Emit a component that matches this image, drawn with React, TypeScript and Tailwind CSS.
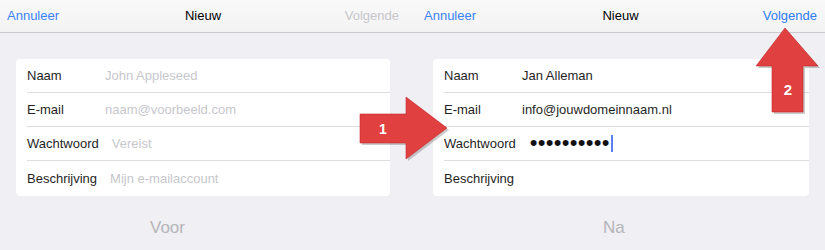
import React from "react";

type Row = { label: string; value?: string; placeholder?: string; password?: boolean };

const leftRows: Row[] = [
  { label: "Naam", placeholder: "John Appleseed" },
  { label: "E-mail", placeholder: "naam@voorbeeld.com" },
  { label: "Wachtwoord", placeholder: "Vereist" },
  { label: "Beschrijving", placeholder: "Mijn e-mailaccount" },
];

const rightRows: Row[] = [
  { label: "Naam", value: "Jan Alleman" },
  { label: "E-mail", value: "info@jouwdomeinnaam.nl" },
  { label: "Wachtwoord", password: true },
  { label: "Beschrijving" },
];

function Card({ rows }: { rows: Row[] }) {
  return (
    <div className="bg-white rounded-[4px]">
      {rows.map((r, i) => (
        <div key={r.label} className="pl-[11px]">
          <div
            className={
              "flex items-center text-[13px] " +
              (i < rows.length - 1 ? "h-[34px] border-b border-[#dedee2]" : "h-[35px]")
            }
          >
            <span className="min-w-[65px] mr-[13px] text-[#1f1f1f] whitespace-nowrap">{r.label}</span>
            {r.value && <span className="text-[#1f1f1f]">{r.value}</span>}
            {r.placeholder && <span className="text-[#c7c7cd]">{r.placeholder}</span>}
            {r.password && (
              <span className="flex items-center">
                <span className="text-[22px] leading-none tracking-[0.3px] text-[#111] mt-[-2px] ml-[1px]">••••••••••</span>
                <span className="w-[2px] h-[17px] bg-[#5a7ff5] ml-[1px]" />
              </span>
            )}
          </div>
        </div>
      ))}
    </div>
  );
}

function TopBar({ active, padL, padR }: { active: boolean; padL: string; padR: string }) {
  return (
    <div
      className={
        "h-[33px] border-b border-[#cbcbcf] bg-gradient-to-b from-[#f9f9f9] to-[#f3f3f4] grid grid-cols-[1fr_auto_1fr] items-center text-[13px] " +
        padL +
        " " +
        padR
      }
    >
      <span className="text-[#3a82f7] justify-self-start">Annuleer</span>
      <span className="text-black">Nieuw</span>
      <span className={"justify-self-end " + (active ? "text-[#2f7cf6]" : "text-[#c6c6ca]")}>Volgende</span>
    </div>
  );
}

export default function App() {
  return (
    <div
      className="relative w-[825px] h-[250px] bg-[#efeff4] flex overflow-hidden"
      style={{ fontFamily: '"Liberation Sans", Arial, sans-serif' }}
    >
      <div className="w-[412px] flex flex-col">
        <TopBar active={false} padL="pl-[7px]" padR="pr-[13px]" />
        <div className="pl-[16px] pr-[22px] mt-[26px]">
          <Card rows={leftRows} />
        </div>
        <div className="pl-[150px] mt-[19px] text-[17px] text-[#b5b5b9]">Voor</div>
      </div>
      <div className="w-[413px] flex flex-col">
        <TopBar active={true} padL="pl-[12px]" padR="pr-[8px]" />
        <div className="pl-[21px] pr-[16px] mt-[26px]">
          <Card rows={rightRows} />
        </div>
        <div className="pl-[191px] mt-[19px] text-[17px] text-[#b5b5b9]">Na</div>
      </div>

      <svg className="absolute inset-0 pointer-events-none" width="825" height="250" viewBox="0 0 825 250">
        <polygon
          points="362,116 408,116 408,99 449,130 408,161 408,145 362,145"
          fill="#6b6b6b"
          opacity="0.35"
        />
        <polygon
          points="360,114 406,114 406,97 447,128 406,159 406,143 360,143"
          fill="#e0403f"
          stroke="#c42a2c"
          strokeWidth="0.6"
        />
        <text x="383" y="134" fill="#ffffff" fontSize="14" fontWeight="bold" textAnchor="middle" fontFamily="Liberation Sans, Arial, sans-serif">
          1
        </text>

        <polygon
          points="787,30 820,68 805,68 805,114 774,114 774,68 758,68"
          fill="#6b6b6b"
          opacity="0.35"
        />
        <polygon
          points="785,28 818,66 803,66 803,112 772,112 772,66 756,66"
          fill="#e0403f"
          stroke="#c42a2c"
          strokeWidth="0.6"
        />
        <text x="788" y="95" fill="#ffffff" fontSize="15" fontWeight="bold" textAnchor="middle" fontFamily="Liberation Sans, Arial, sans-serif">
          2
        </text>
      </svg>
    </div>
  );
}
